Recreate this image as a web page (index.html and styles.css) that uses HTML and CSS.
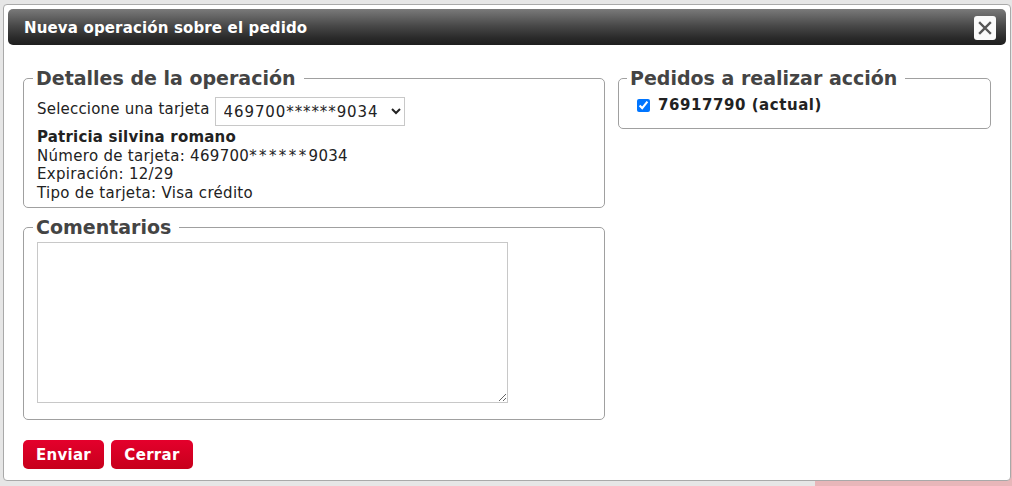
FILE: index.html
```html
<!DOCTYPE html>
<html lang="es">
<head>
<meta charset="utf-8">
<title>Nueva operación sobre el pedido</title>
<link rel="stylesheet" href="styles.css">
</head>
<body>
<div class="dialog">
  <div class="titlebar">
    <span class="title">Nueva operación sobre el pedido</span>
    <button class="close" type="button" aria-label="Cerrar">
      <svg width="14" height="14" viewBox="0 0 14 14"><path d="M2 2L12 12M12 2L2 12" stroke="#555" stroke-width="2.4" stroke-linecap="square"/></svg>
    </button>
  </div>
  <div class="content">
    <div class="col-left">
      <fieldset class="box">
        <legend>Detalles de la operación</legend>
        <div class="select-row">
          <span>Seleccione una tarjeta</span>
          <select class="card-select"><option>469700******9034</option></select>
        </div>
        <div class="card-info">
          <div class="name">Patricia silvina romano</div>
          <div>Número de tarjeta: 469700<span class="mask">******</span>9034</div>
          <div>Expiración: 12/29</div>
          <div>Tipo de tarjeta: Visa crédito</div>
        </div>
      </fieldset>
      <fieldset class="box comments">
        <legend>Comentarios</legend>
        <textarea class="comment-area"></textarea>
      </fieldset>
    </div>
    <div class="col-right">
      <fieldset class="box orders">
        <legend>Pedidos a realizar acción</legend>
        <label class="order"><input type="checkbox" checked> <span>76917790 (actual)</span></label>
      </fieldset>
    </div>
  </div>
  <div class="actions">
    <button class="btn btn-send" type="button">Enviar</button>
    <button class="btn btn-close" type="button">Cerrar</button>
  </div>
</div>
</body>
</html>
```

FILE: styles.css
```css
html, body {
  margin: 0;
  padding: 0;
}
body {
  width: 1012px;
  height: 486px;
  overflow: hidden;
  background: linear-gradient(to right, transparent 815px, #e8b6b9 815px) right bottom / 100% 236px no-repeat, #e6e6e6;
  font-family: "DejaVu Sans", Verdana, sans-serif;
  position: relative;
}
.dialog {
  position: absolute;
  left: 3px;
  top: 4px;
  width: 998px;
  height: 467px;
  padding: 4px;
  background: #fff;
  border: 1px solid #a9a9a9;
  border-radius: 4px;
  display: flex;
  flex-direction: column;
}
.titlebar {
  height: 36px;
  border-radius: 5px;
  background: linear-gradient(#7a7a7a 0%, #4a4a4a 45%, #2a2a2a 80%, #1f1f1f 100%);
  display: flex;
  align-items: center;
  justify-content: space-between;
  padding: 0 10px 0 16px;
}
.title {
  color: #fff;
  font-weight: bold;
  font-size: 15px;
  letter-spacing: 0.15px;
  margin-top: 1px;
}
.close {
  width: 22px;
  height: 24px;
  border: 0;
  border-radius: 3px;
  background: #fafafa;
  padding: 0;
  display: flex;
  align-items: center;
  justify-content: center;
  margin-top: 1px;
}
.content {
  display: flex;
  gap: 13px;
  padding: 22px 15px 0 15px;
}
.col-left {
  width: 582px;
  display: flex;
  flex-direction: column;
  gap: 8px;
}
.col-right {
  flex: 1;
}
.box {
  margin: 0;
  border: 1px solid #a0a0a0;
  border-radius: 5px;
  padding: 0 13px 5px 13px;
  min-width: 0;
}
.box legend {
  font-size: 19px;
  line-height: 22px;
  font-weight: bold;
  color: #444;
  padding: 0 8px 0 3px;
  margin-left: -4px;
}
.select-row {
  display: flex;
  align-items: center;
  gap: 5px;
  font-size: 15px;
  letter-spacing: 0.2px;
  color: #222;
  padding-top: 8px;
}
.select-row span {
  margin-top: -5px;
}
.card-select {
  height: 29px;
  width: 190px;
  font-family: "DejaVu Sans", Verdana, sans-serif;
  font-size: 15px;
  letter-spacing: 0.9px;
  color: #222;
  border: 1px solid #c8c8c8;
  border-radius: 0;
  background: #fff;
  padding: 0 2px 0 4px;
}
.card-info {
  font-size: 15px;
  line-height: 18.6px;
  letter-spacing: 0.3px;
  color: #222;
  padding-top: 2px;
}
.mask {
  letter-spacing: 2.4px;
}
.name {
  font-weight: bold;
  letter-spacing: 0.2px;
}
.comments {
  padding-bottom: 16px;
}
.comment-area {
  display: block;
  width: 465px;
  height: 155px;
  margin-top: 4px;
  border: 1px solid #c8c8c8;
  padding: 2px;
  resize: both;
}
.orders {
  padding-bottom: 14px;
}
.orders legend {
  margin-left: -5px;
}
.order {
  display: flex;
  align-items: center;
  gap: 8px;
  padding-left: 5px;
  padding-top: 7px;
  font-size: 15px;
  font-weight: bold;
  letter-spacing: 0.55px;
  color: #222;
}
.order input {
  margin: 0;
  width: 13px;
  height: 13px;
}
.actions {
  display: flex;
  gap: 7px;
  padding: 20px 15px 0 15px;
}
.btn {
  height: 29px;
  padding: 0;
  border: 0;
  border-radius: 5px;
  background: linear-gradient(#e4002c, #c7001b);
  color: #fff;
  font-family: "DejaVu Sans", Verdana, sans-serif;
  font-weight: bold;
  font-size: 15px;
  letter-spacing: 0.3px;
}
.btn-send {
  width: 81px;
}
.btn-close {
  width: 82px;
}
```
